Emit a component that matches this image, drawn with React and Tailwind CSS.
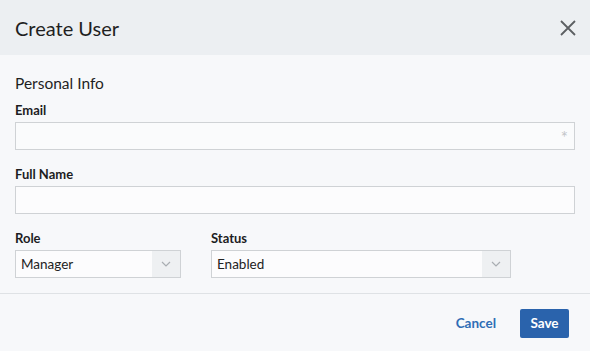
import React from "react";

const font = { fontFamily: "Lato, 'Open Sans', Arial, sans-serif" };

function Label({ children }) {
  return <div className="text-[13px] font-bold leading-4 text-[#1d1d1f] mb-[4px]">{children}</div>;
}

function Chevron() {
  return (
    <svg width="10" height="6" viewBox="0 0 10 6" fill="none">
      <path d="M1 1l4 4 4-4" stroke="#a9adb2" strokeWidth="1.2" />
    </svg>
  );
}

function Select({ value, width }) {
  return (
    <div className={`${width} h-[28px] flex border border-[#cfd2d5] bg-[#fcfcfd]`}>
      <div className="flex-1 flex items-center pl-[5px] text-[13.5px] text-[#222]">{value}</div>
      <div className="w-[28px] flex items-center justify-center bg-[#eef0f2]">
        <Chevron />
      </div>
    </div>
  );
}

export default function App() {
  return (
    <div className="w-[590px] h-[351px] bg-[#f7f8fa] flex flex-col" style={font}>
      <div className="h-[55px] bg-[#eceff2] flex items-center justify-between pl-[15px] pr-[14px]">
        <div className="text-[20px] text-[#1f1f1f]">Create User</div>
        <svg width="16" height="16" viewBox="0 0 16 16">
          <path d="M1 1l14 14M15 1L1 15" stroke="#5c5f63" strokeWidth="1.8" />
        </svg>
      </div>
      <div className="px-[15px] pt-[18px]">
        <div className="text-[15.5px] leading-5 text-[#1f1f1f] mb-[9px]">Personal Info</div>
        <Label>Email</Label>
        <div className="h-[28px] border border-[#cfd2d5] bg-[#fafbfc] flex items-center justify-end pr-[6px] pt-[4px] text-[17px] text-[#c2c5c8]">
          *
        </div>
        <div className="mt-[16px]">
          <Label>Full Name</Label>
          <div className="h-[28px] border border-[#cfd2d5] bg-[#fcfcfd]" />
        </div>
        <div className="mt-[16px] flex gap-[30px]">
          <div>
            <Label>Role</Label>
            <Select value="Manager" width="w-[166px]" />
          </div>
          <div>
            <Label>Status</Label>
            <Select value="Enabled" width="w-[300px]" />
          </div>
        </div>
      </div>
      <div className="mt-[15px] border-t border-[#dfe2e5]" />
      <div className="flex-1 flex items-center justify-end gap-[24px] pr-[21px] pt-[1px]">
        <button className="text-[13.5px] font-bold text-[#2f6db5]">Cancel</button>
        <button className="h-[29px] w-[49px] rounded-[2px] bg-[#2a63ac] text-[13.5px] font-bold text-white">Save</button>
      </div>
    </div>
  );
}
